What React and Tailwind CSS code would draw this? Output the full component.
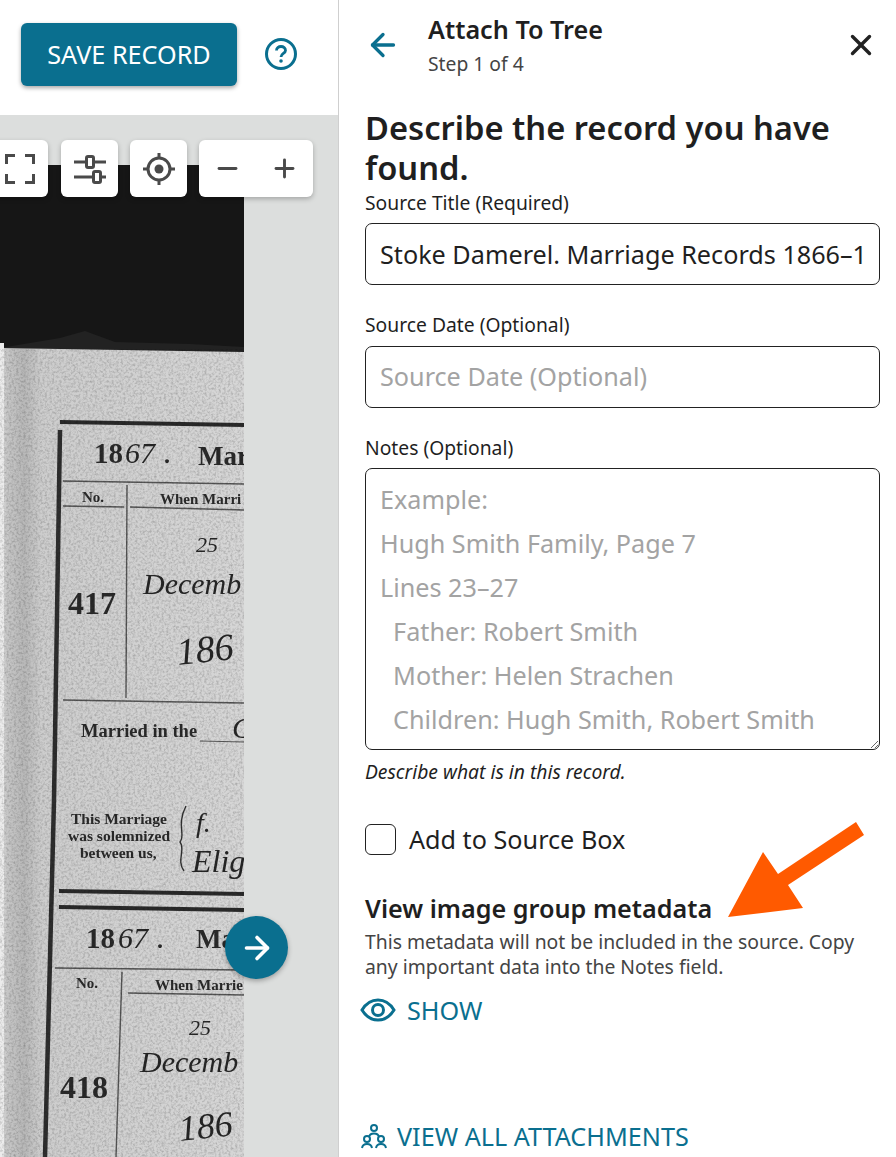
import React from "react";
import { ArrowLeft, ArrowRight, X, Minus, Plus } from "lucide-react";

const TEAL = "#0a6f8f";

const printed = { fontFamily: "'Liberation Serif', serif", fontWeight: 700, fill: "#2a2a2a" };
const written = { fontFamily: "'Liberation Serif', serif", fontStyle: "italic", fill: "#262626" };

const RegisterScan = () => (
  <svg viewBox="0 165 244 992" className="block w-[244px] h-[992px]">
    <defs>
      <linearGradient id="paper" x1="0" x2="1" y1="0" y2="0">
        <stop offset="0" stopColor="#dcdcdc" />
        <stop offset="0.03" stopColor="#c6c6c6" />
        <stop offset="0.1" stopColor="#b8b8b8" />
        <stop offset="0.17" stopColor="#cdcdcd" />
        <stop offset="1" stopColor="#d6d6d6" />
      </linearGradient>
      <filter id="grain" x="0" y="0" width="100%" height="100%">
        <feTurbulence type="fractalNoise" baseFrequency="0.42" numOctaves="3" seed="4" />
        <feColorMatrix values="0 0 0 0 0  0 0 0 0 0  0 0 0 0 0  1.8 0 0 0 -0.72" />
      </filter>
      <filter id="soft">
        <feGaussianBlur stdDeviation="0.45" />
      </filter>
    </defs>
    <rect x="0" y="165" width="244" height="992" fill="#161616" />
    <path d="M60 338 L85 331 L115 342 L190 344 L244 347 L244 352 L0 348 Z" fill="#222" />
    <path d="M0 348 L244 352 L244 1157 L0 1157 Z" fill="url(#paper)" />
    <rect x="0" y="343" width="4" height="814" fill="#ececec" />

    <g filter="url(#soft)">
      {/* ruled lines of the register */}
      <path d="M60 422 L244 425" stroke="#2b2b2b" strokeWidth="4" />
      <path d="M60 430 L54 800 L45 1157" stroke="#2e2e2e" strokeWidth="4.5" fill="none" />
      <path d="M63 481 L244 484 M63 506 L124 507 M130 507 L244 510 M63 700 L244 703" stroke="#555" strokeWidth="1.4" />
      <path d="M127 485 L126 698" stroke="#555" strokeWidth="1.4" />
      <path d="M59 891 L244 894 M59 907 L244 910" stroke="#2b2b2b" strokeWidth="4" />
      <path d="M55 968 L244 970 M128 993 L244 995" stroke="#555" strokeWidth="1.3" />
      <path d="M122 972 L116 1157" stroke="#555" strokeWidth="1.4" />
      <path d="M200 741 L244 742" stroke="#555" strokeWidth="1" />

      <text x="94" y="463" fontSize="29" {...printed}>18</text>
      <text x="125" y="463" fontSize="30" {...written}>67</text>
      <text x="164" y="463" fontSize="24" {...printed}>.</text>
      <text x="198" y="465" fontSize="27" {...printed}>Mar</text>
      <text x="82" y="502" fontSize="15" {...printed}>No.</text>
      <text x="160" y="504" fontSize="15" {...printed}>When Marri</text>
      <text x="196" y="552" fontSize="22" {...written}>25</text>
      <text x="143" y="594" fontSize="30" {...written}>Decemb</text>
      <text x="68" y="614" fontSize="32" {...printed}>417</text>
      <text x="178" y="665" fontSize="38" transform="rotate(-6 178 665)" {...written}>186</text>
      <text x="81" y="737" fontSize="18.5" {...printed}>Married in the</text>
      <text x="232" y="738" fontSize="30" {...written}>C</text>

      <text x="71" y="824" fontSize="15.5" {...printed}>This Marriage</text>
      <text x="68" y="841" fontSize="15.5" {...printed}>was solemnized</text>
      <text x="80" y="858" fontSize="15.5" {...printed}>between us,</text>
      <path d="M186 806 C176 825 186 835 180 842 C186 850 176 860 184 871" stroke="#333" strokeWidth="1.4" fill="none" />
      <text x="196" y="832" fontSize="28" {...written}>f.</text>
      <text x="192" y="872" fontSize="32" {...written}>Elig</text>

      <text x="86" y="948" fontSize="29" {...printed}>18</text>
      <text x="118" y="948" fontSize="30" {...written}>67</text>
      <text x="157" y="948" fontSize="24" {...printed}>.</text>
      <text x="196" y="948" fontSize="27" {...printed}>Ma</text>
      <text x="76" y="988" fontSize="15" {...printed}>No.</text>
      <text x="155" y="990" fontSize="15" {...printed}>When Marrie</text>
      <text x="189" y="1035" fontSize="22" {...written}>25</text>
      <text x="140" y="1072" fontSize="30" {...written}>Decemb</text>
      <text x="60" y="1098" fontSize="32" {...printed}>418</text>
      <text x="180" y="1141" fontSize="36" transform="rotate(-6 180 1141)" {...written}>186</text>
    </g>
    <rect x="0" y="349" width="244" height="808" filter="url(#grain)" opacity="0.22" />
  </svg>
);

const ToolButton = ({ className = "", children }) => (
  <div className={`flex items-center h-[57px] bg-white rounded-[6px] shadow-[0_2px_5px_rgba(0,0,0,0.25)] ${className}`}>
    {children}
  </div>
);

const Toolbar = () => (
  <div className="absolute left-[-9px] top-[25px] flex gap-[13px]">
    <ToolButton className="w-[57px] justify-center">
      <svg width="30" height="30" viewBox="0 0 30 30" fill="none" stroke="#4a4a4a" strokeWidth="3">
        <path d="M1.5 10V1.5H10M20 1.5H28.5V10M28.5 20V28.5H20M10 28.5H1.5V20" />
      </svg>
    </ToolButton>
    <div className="flex gap-[12px]">
      <ToolButton className="w-[57px] justify-center">
        <svg width="34" height="30" viewBox="0 0 34 30" fill="none" stroke="#4a4a4a" strokeWidth="3">
          <path d="M1 8H13M21 8H33M1 23H20M28 23H33" />
          <rect x="13.5" y="2.5" width="7" height="11" rx="1.5" />
          <rect x="20.5" y="17.5" width="7" height="11" rx="1.5" />
        </svg>
      </ToolButton>
      <ToolButton className="w-[57px] justify-center">
        <svg width="34" height="34" viewBox="0 0 34 34" fill="none" stroke="#4a4a4a" strokeWidth="3">
          <circle cx="17" cy="17" r="11" />
          <circle cx="17" cy="17" r="4.5" fill="#4a4a4a" stroke="none" />
          <path d="M17 1V6M17 28V33M1 17H6M28 17H33" />
        </svg>
      </ToolButton>
      <ToolButton className="w-[114px] justify-between px-[14px]">
        <Minus size={29} color="#4a4a4a" strokeWidth={2.4} />
        <Plus size={29} color="#4a4a4a" strokeWidth={2.4} />
      </ToolButton>
    </div>
  </div>
);

const EyeIcon = () => (
  <svg width="36" height="24" viewBox="0 0 36 24" fill="none" stroke={TEAL} strokeWidth="3">
    <path d="M2 12C6 5.5 11.5 2 18 2S30 5.5 34 12C30 18.5 24.500 22 18 22S6 18.5 2 12Z" />
    <circle cx="18" cy="12" r="5.500" />
  </svg>
);

const PeopleIcon = () => (
  <svg width="26" height="25" viewBox="0 0 26 25" fill="none" stroke={TEAL} strokeWidth="2">
    <circle cx="13" cy="4" r="3" />
    <path d="M8 13C8.500 10.500 10.500 9.500 13 9.500S17.500 10.500 18 13" />
    <circle cx="6" cy="15" r="3" />
    <path d="M1 24C1.500 21 3.500 20 6 20S10.500 21 11 24" />
    <circle cx="20" cy="15" r="3" />
    <path d="M15 24C15.500 21 17.500 20 20 20S24.500 21 25 24" />
  </svg>
);

const App = () => {
  const notesHint =
    "Example:\nHugh Smith Family, Page 7\nLines 23–27\n  Father: Robert Smith\n  Mother: Helen Strachen\n  Children: Hugh Smith, Robert Smith";

  return (
    <div className="relative flex w-[896px] h-[1157px] overflow-hidden bg-white font-['Noto_Sans',sans-serif] text-[#1f1f1f]">
      {/* record viewer */}
      <div className="flex flex-col w-[339px] shrink-0 border-r border-[#cfcfcf]">
        <div className="flex items-center h-[115px] pl-[21px] pb-[7px] gap-[28px]">
          <button className="w-[216px] h-[63px] pt-[2px] rounded-[6px] bg-[#0a6f8f] text-white text-[25.2px] uppercase shadow-[0_2px_4px_rgba(0,0,0,0.35)]">
            Save Record
          </button>
          <svg width="32" height="32" viewBox="0 0 32 32" fill="none">
            <circle cx="16" cy="16" r="14.500" stroke={TEAL} strokeWidth="3" />
            <path d="M11.500 12.500C11.500 10 13.500 8.500 16 8.500S20.500 10 20.500 12.500C20.500 15.500 16 15.500 16 19" stroke={TEAL} strokeWidth="2.800" />
            <circle cx="16" cy="23" r="1.800" fill={TEAL} />
          </svg>
        </div>
        <div className="relative flex-1 bg-[#dcdedd] pt-[50px] overflow-hidden">
          <RegisterScan />
          <Toolbar />
          <div className="absolute left-[225px] top-[801px] flex items-center justify-center w-[63px] h-[63px] rounded-full bg-[#0a6f8f] shadow-[0_2px_5px_rgba(0,0,0,0.3)]">
            <ArrowRight size={36} color="white" strokeWidth={2.4} />
          </div>
        </div>
      </div>

      {/* attach panel */}
      <div className="flex flex-col flex-1 pl-[26px] pr-[16px]">
        <div className="flex items-start h-[108px] pt-[12px]">
          <ArrowLeft size={36} color={TEAL} strokeWidth={2.2} className="mt-[15px]" />
          <div className="ml-[27px] flex-1">
            <div className="text-[25.2px] leading-[35px] font-semibold">Attach To Tree</div>
            <div className="text-[19.3px] leading-[34px] text-[#444]">Step 1 of 4</div>
          </div>
          <X size={34} color="#222" strokeWidth={2.4} className="mt-[16px] mr-[2px]" />
        </div>

        <h1 className="text-[32.7px] leading-[40px] font-semibold">Describe the record you have found.</h1>

        <label className="block text-[19.3px] leading-[24px] mt-[3px] mb-[8px]">Source Title (Required)</label>
        <input
          readOnly
          value="Stoke Damerel. Marriage Records 1866–1"
          className="block w-full h-[62px] px-[14px] text-[25.2px] border border-[#222] rounded-[7px] outline-none"
        />

        <label className="block text-[19.3px] leading-[24px] mt-[28px] mb-[9px]">Source Date (Optional)</label>
        <input
          readOnly
          placeholder="Source Date (Optional)"
          className="block w-full h-[62px] px-[14px] pb-[2px] text-[25.2px] border border-[#222] rounded-[7px] outline-none placeholder:text-[#a3a3a3]"
        />

        <label className="block text-[19.3px] leading-[24px] mt-[28px] mb-[8px]">Notes (Optional)</label>
        <textarea
          readOnly
          placeholder={notesHint}
          className="block w-full h-[282px] px-[14px] pt-[8px] pb-[10px] text-[25.2px] leading-[44px] border border-[#222] rounded-[7px] outline-none resize-y placeholder:text-[#a3a3a3]"
        />
        <div className="text-[19.3px] leading-[24px] italic mt-[10px]">Describe what is in this record.</div>

        <div className="flex items-center gap-[13px] mt-[38px]">
          <div className="w-[31px] h-[31px] border border-[#222] rounded-[6px]" />
          <span className="text-[25.2px] leading-[34px]">Add to Source Box</span>
        </div>

        <div className="text-[25.2px] leading-[34px] font-semibold mt-[35px]">View image group metadata</div>
        <p className="text-[19.35px] leading-[25px] text-[#444] mt-[4px]">
          This metadata will not be included in the source. Copy any important data into the Notes field.
        </p>

        <div className="flex items-center gap-[11px] ml-[-5px] mt-[14px] text-[25.2px] leading-[34px] text-[#0a6f8f]">
          <EyeIcon />
          <span>SHOW</span>
        </div>

        <div className="flex items-center gap-[10px] ml-[-4px] mt-[92px] text-[25.2px] leading-[34px] text-[#0a6f8f]">
          <PeopleIcon />
          <span>VIEW ALL ATTACHMENTS</span>
        </div>
      </div>

      {/* orange annotation arrow */}
      <svg className="absolute left-[720px] top-[815px]" width="150" height="110" viewBox="0 0 150 110">
        <path d="M8 102 L43 37 L58 59 L136 7 L144 20 L68 70 L83 93 Z" fill="#ff5a00" />
      </svg>
    </div>
  );
};

export default App;
